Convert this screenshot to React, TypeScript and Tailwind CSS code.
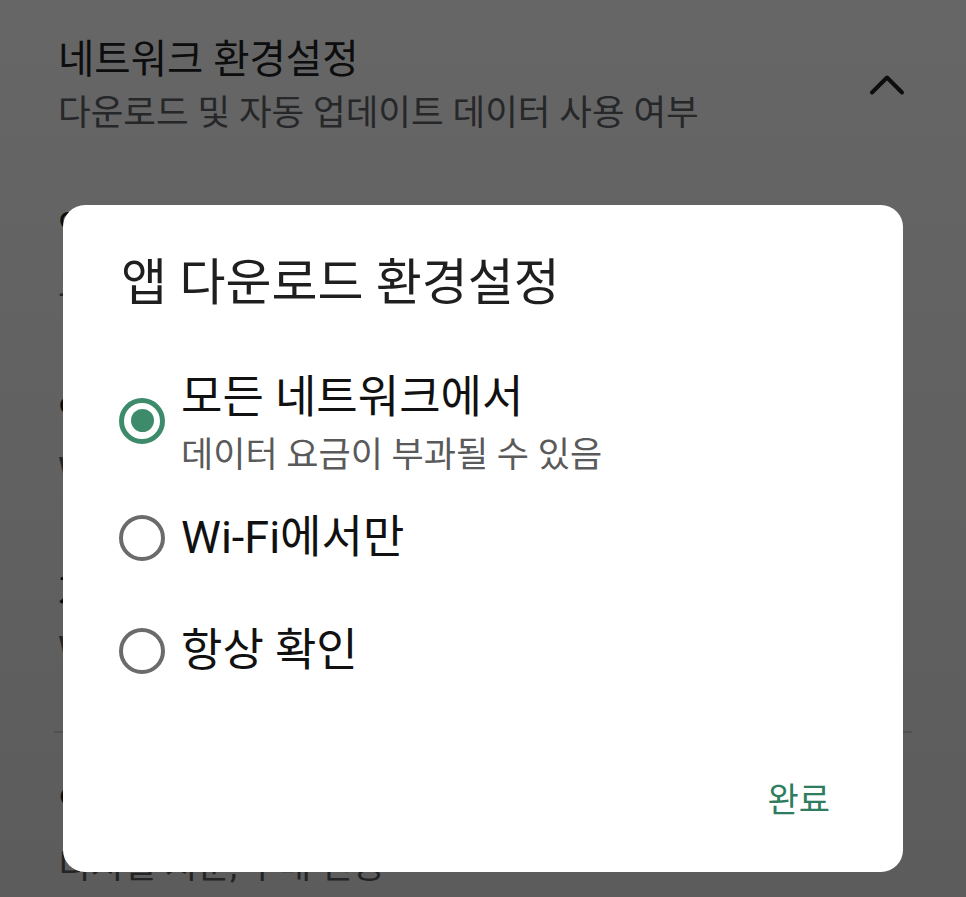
import { ChevronUp } from "lucide-react";

const font = { fontFamily: "Roboto, 'Noto Sans CJK KR', sans-serif" };

const bgRows = [
  { title: "앱 다운로드 환경설정", sub: "모든 네트워크에서", top: "mt-[64px]" },
  { title: "앱 자동 업데이트", sub: "Wi-Fi를 통해서만", top: "mt-[77px]" },
  { title: "자동 재생 동영상", sub: "Wi-Fi에서만", top: "mt-[71px]" },
];

function Radio({ checked }: { checked: boolean }) {
  return checked ? (
    <div className="w-[46px] h-[46px] shrink-0 rounded-full border-[5px] border-[#3d8b6b] flex items-center justify-center">
      <div className="w-[23px] h-[23px] rounded-full bg-[#3d8b6b]" />
    </div>
  ) : (
    <div className="w-[46px] h-[46px] shrink-0 rounded-full border-[4.5px] border-[#6b6b6b]" />
  );
}

export default function App() {
  return (
    <div className="relative w-[966px] h-[897px] overflow-hidden bg-white" style={font}>
      {/* settings page behind the dialog */}
      <div className="px-[58px] pt-[32px]">
        <div className="flex items-center justify-between">
          <div>
            <h2 className="text-[39.5px] leading-[56px] text-[#202124]">네트워크 환경설정</h2>
            <p className="text-[35.5px] leading-[50px] text-[#5f6368]">
              다운로드 및 자동 업데이트 데이터 사용 여부
            </p>
          </div>
          <ChevronUp className="w-[60px] h-[60px] text-[#202124] mr-[-9px]" strokeWidth={1.6} />
        </div>

        {bgRows.map((r) => (
          <div key={r.title} className={r.top}>
            <div className="text-[39.5px] leading-[56px] text-[#202124]">{r.title}</div>
            <div className="mt-[2px] text-[35.5px] leading-[50px] text-[#5f6368]">{r.sub}</div>
          </div>
        ))}

        <div className="mt-[57px] -mx-[4px] border-t-2 border-[#dadce0]" />

        <div className="mt-[44px]">
          <div className="text-[39.5px] leading-[56px] text-[#202124]">인증</div>
          <div className="mt-[8px] text-[35.5px] leading-[50px] text-[#5f6368]">디지털 지문, 구매 인증</div>
        </div>
      </div>

      {/* scrim */}
      <div className="absolute inset-0 bg-gradient-to-b from-black/60 to-black/[0.64]" />

      {/* dialog */}
      <div className="absolute left-[63px] top-[205px] w-[840px] rounded-[22px] bg-white pt-[48px] pb-[50px]">
        <h1 className="pl-[58px] text-[50px] leading-[60px] text-[#1f1f1f]">앱 다운로드 환경설정</h1>

        <div className="mt-[47px] pl-[56px]">
          <div className="h-[121px] flex items-center gap-[16px]">
            <Radio checked />
            <div className="mt-[10px]">
              <div className="text-[45px] leading-[52px] text-[#111111]">모든 네트워크에서</div>
              <div className="mt-[9px] text-[35px] leading-[46px] text-[#5a5a5a]">데이터 요금이 부과될 수 있음</div>
            </div>
          </div>
          <div className="h-[113px] flex items-center gap-[16px]">
            <Radio checked={false} />
            <div className="text-[45px] leading-[52px] text-[#111111]">Wi-Fi에서만</div>
          </div>
          <div className="h-[113px] flex items-center gap-[16px]">
            <Radio checked={false} />
            <div className="text-[45px] leading-[52px] text-[#111111]">항상 확인</div>
          </div>
        </div>

        <div className="mt-[71px] flex justify-end pr-[73px]">
          <button className="text-[34px] leading-[44px] text-[#2f7d5f]">완료</button>
        </div>
      </div>
    </div>
  );
}
